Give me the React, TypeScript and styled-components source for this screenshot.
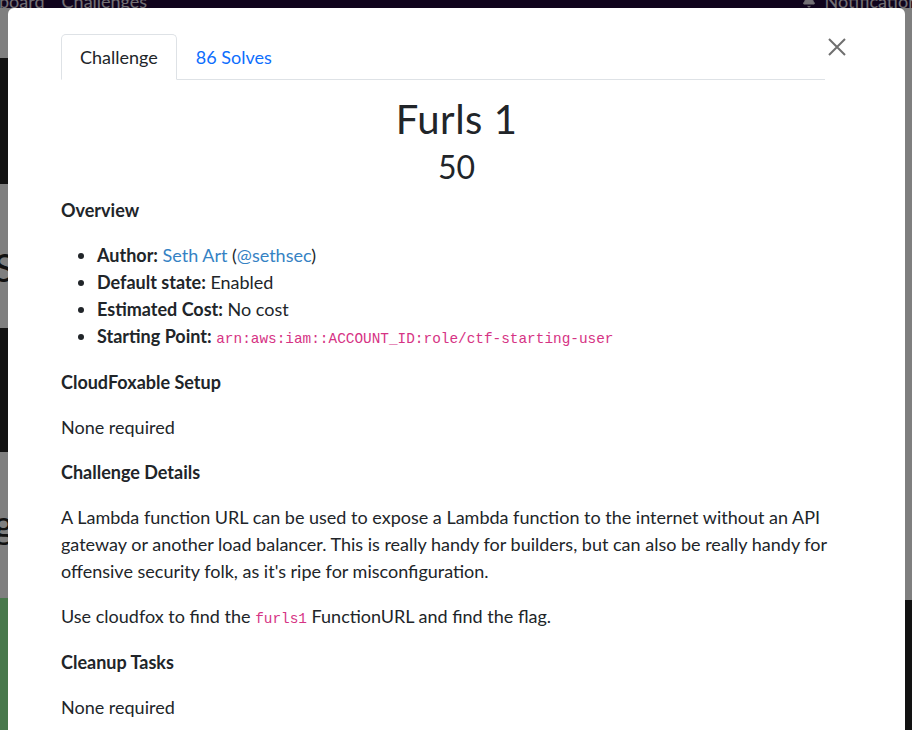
import styled, { createGlobalStyle } from 'styled-components'
import { Bell } from 'lucide-react'

const GlobalStyle = createGlobalStyle`
  html, body {
    margin: 0;
    padding: 0;
    background: #ffffff;
    font-family: 'Lato', 'Noto Sans', sans-serif;
    font-size: 18px;
    color: #212529;
    overflow: hidden;
  }
  * {
    box-sizing: border-box;
  }
`

const Page = styled.div`
  height: 730px;
  display: flex;
  flex-direction: column;
`

const NavBar = styled.nav`
  height: 8px;
  flex: none;
  overflow: hidden;
  background: #21093a;
  display: flex;
  justify-content: space-between;
  color: #e6e1ea;
  font-size: 18px;
  line-height: 18px;
`

const NavLinks = styled.div`
  display: flex;
  gap: 17px;
  margin: -8px 0 0 -45px;
`

const NavRight = styled.div`
  display: flex;
  align-items: flex-start;
  gap: 9px;
  margin: -8px -14px 0 0;
  > svg {
    margin-top: 2px;
  }
`

const Main = styled.div`
  flex: 1;
  display: flex;
  justify-content: space-between;
  overflow: hidden;
`

const Strip = styled.div<{ $width: number }>`
  width: ${p => p.$width}px;
  display: flex;
  flex-direction: column;
  overflow: hidden;
`

const Block = styled.div<{ $h: number; $bg: string }>`
  height: ${p => p.$h}px;
  flex: none;
  background: ${p => p.$bg};
  overflow: hidden;
`

const Letter = styled.span<{ $top: number }>`
  display: block;
  margin: ${p => p.$top}px 0 0 -6px;
  font-size: 38px;
  line-height: 38px;
  color: #222;
`

const Backdrop = styled.div`
  position: fixed;
  inset: 0;
  background: rgba(0, 0, 0, 0.5);
`

const Modal = styled.div`
  position: fixed;
  top: 8px;
  left: 8px;
  width: 897px;
  height: 760px;
  background: #fff;
  border-radius: 6px;
  padding: 26px 53px;
`

const CloseButton = styled.button`
  position: absolute;
  top: 30px;
  right: 59px;
  width: 18px;
  height: 18px;
  padding: 0;
  border: 0;
  background: transparent;
  cursor: pointer;
  > svg {
    display: block;
  }
`

const Tabs = styled.ul`
  list-style: none;
  margin: 0 27px 0 0;
  padding: 0;
  display: flex;
  border-bottom: 1px solid #dee2e6;
`

const Tab = styled.li<{ $active?: boolean }>`
  margin-bottom: -1px;
  padding: 10px 18px;
  font-size: 18px;
  line-height: 24px;
  border: 1px solid ${p => (p.$active ? '#dee2e6' : 'transparent')};
  border-bottom-color: ${p => (p.$active ? '#fff' : 'transparent')};
  border-radius: 5px 5px 0 0;
  background: ${p => (p.$active ? '#fff' : 'transparent')};
  color: ${p => (p.$active ? '#212529' : '#0d6efd')};
`

const Title = styled.h2`
  margin: 15px 0 0;
  text-align: center;
  font-size: 40px;
  line-height: 48px;
  font-weight: 400;
  letter-spacing: 0.5px;
  color: #212529;
`

const Value = styled.h3`
  margin: 5px 0 0;
  text-align: center;
  font-size: 32px;
  line-height: 38px;
  font-weight: 400;
  color: #212529;
`

const Body = styled.div`
  margin-top: 11px;
  font-size: 18px;
  line-height: 27px;
  color: #212529;
`

const Heading = styled.h5`
  margin: 0 0 18px;
  font-size: 18px;
  line-height: 27px;
  font-weight: 700;
  color: #212529;
`

const Text = styled.p`
  margin: 0 0 18px;
`

const List = styled.ul`
  margin: 0 0 18px;
  padding-left: 36px;
  > li > strong {
    font-weight: 700;
  }
`

const Link = styled.a`
  color: #3582c4;
  text-decoration: none;
`

const Code = styled.code`
  font-family: 'Liberation Mono', 'DejaVu Sans Mono', monospace;
  font-size: 14.4px;
  line-height: 23px;
  color: #d63384;
`

const App = () => {
  return (
    <>
      <GlobalStyle />
      <Page>
        <NavBar>
          <NavLinks>
            <span>Scoreboard</span>
            <span>Challenges</span>
          </NavLinks>
          <NavRight>
            <Bell size={14} fill="currentColor" />
            <span>Notifications</span>
          </NavRight>
        </NavBar>
        <Main>
          <Strip $width={8}>
            <Block $h={50} $bg="#ffffff" />
            <Block $h={126} $bg="#242424" />
            <Block $h={144} $bg="#ffffff">
              <Letter $top={64}>S</Letter>
            </Block>
            <Block $h={124} $bg="#242424" />
            <Block $h={146} $bg="#ffffff">
              <Letter $top={52}>g</Letter>
            </Block>
            <Block $h={140} $bg="#90f096" />
          </Strip>
          <Strip $width={7}>
            <Block $h={592} $bg="#ffffff" />
            <Block $h={140} $bg="#242424" />
          </Strip>
        </Main>
      </Page>
      <Backdrop />
      <Modal>
        <CloseButton aria-label="Close">
          <svg width="18" height="18" viewBox="0 0 18 18">
            <path d="M1 1 L17 17 M17 1 L1 17" stroke="#6f6f6f" strokeWidth="2" />
          </svg>
        </CloseButton>
        <Tabs>
          <Tab $active>Challenge</Tab>
          <Tab>86 Solves</Tab>
        </Tabs>
        <Title>Furls 1</Title>
        <Value>50</Value>
        <Body>
          <Heading>Overview</Heading>
          <List>
            <li><strong>Author:</strong> <Link href="#">Seth Art</Link> (<Link href="#">@sethsec</Link>)</li>
            <li><strong>Default state:</strong> Enabled</li>
            <li><strong>Estimated Cost:</strong> No cost</li>
            <li><strong>Starting Point:</strong> <Code>arn:aws:iam::ACCOUNT_ID:role/ctf-starting-user</Code></li>
          </List>
          <Heading>CloudFoxable Setup</Heading>
          <Text>None required</Text>
          <Heading>Challenge Details</Heading>
          <Text>
            A Lambda function URL can be used to expose a Lambda function to the internet without an API
            gateway or another load balancer. This is really handy for builders, but can also be really handy for
            offensive security folk, as it's ripe for misconfiguration.
          </Text>
          <Text>Use cloudfox to find the <Code>furls1</Code> FunctionURL and find the flag.</Text>
          <Heading>Cleanup Tasks</Heading>
          <Text>None required</Text>
        </Body>
      </Modal>
    </>
  )
}

export default App
